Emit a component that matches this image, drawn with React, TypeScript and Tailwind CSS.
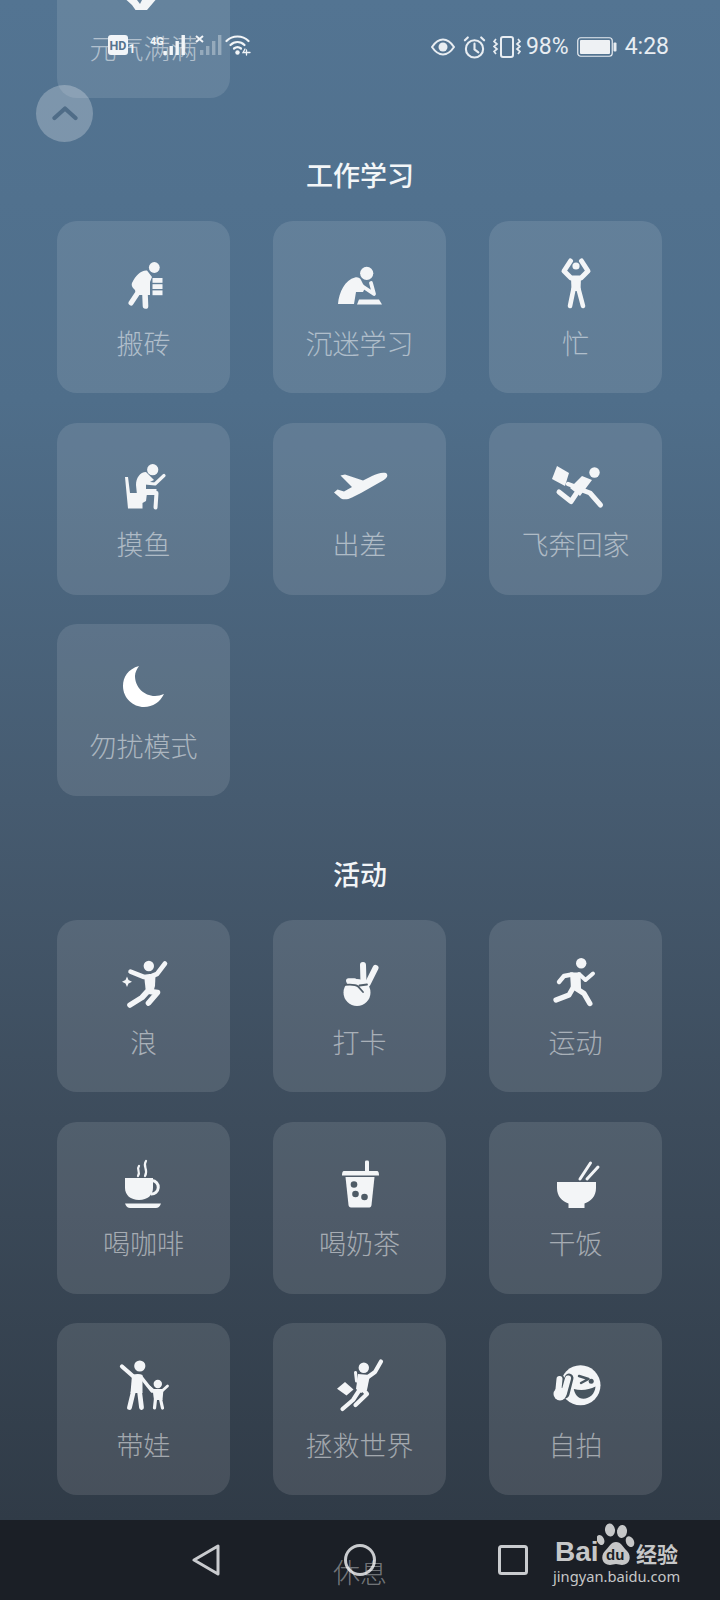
import React from 'react';

// all pictograms share a 60x60 box, white fill with round strokes for limbs
const Svg: React.FC<{ children: React.ReactNode }> = ({ children }) => (
    <svg width="60" height="60" viewBox="0 0 60 60" fill="#f3f5f7" stroke="none" className="block overflow-visible">
        {children}
    </svg>
);

const Limb: React.FC<{ d: string; w?: number; color?: string }> = ({ d, w = 4.5, color = '#f3f5f7' }) => (
    <path d={d} fill="none" stroke={color} strokeWidth={w} strokeLinecap="round" strokeLinejoin="round" />
);

const TopIcon = () => (
    <Svg>
        <path d="M12.5 40 L18 45 L21.5 50 L33 50 L41.5 40 L28 40 L26 44 L23 40 Z" />
    </Svg>
);

const BrickIcon = () => (
    <Svg>
        <circle cx="40.3" cy="12.5" r="5.4" />
        <path d="M33 15.5 C27 15 22 20 18 28 C17 31 19 33 21 35 L22 40 L36 40 L36 27 L38 22 Z" />
        <Limb d="M23 39 L17 48" w={5} />
        <Limb d="M31 39 L31.5 51" w={5.6} />
        <rect x="38.5" y="23" width="10" height="4.8" />
        <rect x="38.5" y="29.2" width="10" height="4.8" />
        <rect x="38.5" y="35.4" width="10" height="4.8" />
    </Svg>
);

const StudyIcon = () => (
    <Svg>
        <circle cx="36.7" cy="18.3" r="6.6" />
        <path d="M8 49 C9 37 15 25 25 22.5 C28 22 30 23 31 25 L35 33 L33 37 L26 37 L24 49 Z" />
        <Limb d="M29 29 L44 39 L41 28" w={3.8} />
        <path d="M29 44.5 L49 44.5 L52 49.5 L27 49.5 Z" />
    </Svg>
);

const BusyIcon = () => (
    <Svg>
        <circle cx="30" cy="11" r="3.6" />
        <Limb d="M24.5 6 L18 16 L25 23 L35 23 L42 16 L35.5 6" w={5} />
        <path d="M25 22 L35 22 L34.5 36 L25.5 36 Z" />
        <Limb d="M27.5 34 L24 51" w={4.6} />
        <Limb d="M32.5 34 L37 51" w={4.6} />
    </Svg>
);

const SlackIcon = () => (
    <Svg>
        <circle cx="38.7" cy="12.7" r="5.6" />
        <path d="M32 15 C26 15 22 21 22 28 L23 38 L42.5 38 L42.5 32 L32 32 L32 27 L40 23 Z" />
        <Limb d="M31 26 L41 27 L50 18.5" w={3.2} />
        <path d="M11 20 L14 20 L16 36 L33 36 L32 44 L28.5 46 L28.5 51.5 L14 51.5 Z" />
        <Limb d="M42.5 36 L41.5 50.5" w={4} />
    </Svg>
);

const PlaneIcon = () => (
    <Svg>
        <path d="M56 16 C52 15 47 16.5 42 19 L33 23.5 L15 17.5 L10.5 18.5 L22 30 L14 34.5 L7.5 32.5 L4 35.5 L11 41.5 C14 43 18 42.5 22 40.5 L31 36 L53 23.5 C57.5 21 58.5 18 56 16Z" />
    </Svg>
);

const RushIcon = () => (
    <Svg>
        <circle cx="48.5" cy="15.5" r="5.2" />
        <path d="M11 9 L23 16 L19 29 L6 22 Z" />
        <path d="M36 19 L46 23 L34 39 L24 31 Z" />
        <Limb d="M22 27 L33 31" w={4.4} />
        <Limb d="M36 33 L44 36 L54.5 48" w={5} />
        <Limb d="M30 37 L25 44.5 L13 35" w={5} />
    </Svg>
);

const MoonIcon = () => (
    <Svg>
        <path d="M25 8 C14 11 9 19 9 28 C9 40 19 49 30 49 C39 49 46 44 50 36 C47 37 44 38 41 38 C30 38 21 29 21 18 C21 14 23 11 25 8Z" fill="#ffffff" />
    </Svg>
);

const WaveIcon = () => (
    <Svg>
        <circle cx="34.8" cy="12" r="5.2" />
        <Limb d="M16.5 17.7 L30 23 L38 22 L43 20 L51 9.5" w={4.6} />
        <path d="M30 21 L41.5 21 L41 32 L39 39 L32 39 Z" />
        <Limb d="M36 37.5 L43.5 38.5 L34.5 49" w={5.6} />
        <Limb d="M33 38 L28 43.5 L16 51" w={5.6} />
        <path d="M13 22.5 L14.5 26 L18 27.7 L14.5 29.4 L13 33 L11.5 29.4 L8 27.7 L11.5 26 Z" />
    </Svg>
);

const VictoryIcon = () => (
    <Svg>
        <circle cx="27" cy="38.5" r="13.5" />
        <path d="M27 27 L38 29 L40 38 L28 36 Z" />
        <Limb d="M33.5 29 L33 11" w={6} />
        <Limb d="M37.5 30 L45.5 14" w={6} />
        <Limb d="M18.5 26.8 L24.5 26.8" w={5} />
        <path d="M14.5 31 C20 30.5 25 30 28 32.5 L33 38 M29.5 31.5 L37 30.5" fill="none" stroke="#505d69" strokeWidth="1.8" strokeLinecap="round" />
    </Svg>
);

const RunIcon = () => (
    <Svg>
        <circle cx="35.2" cy="9.3" r="5.2" />
        <path d="M24 18.5 L34.5 18.5 L35 35 L25 36 Z" />
        <Limb d="M26 20.5 L18 22 L13 28" w={4.4} />
        <Limb d="M33 20 L39.5 26 L47 19.5" w={4} />
        <Limb d="M29.5 34 L38 39.5 L43.8 49.5" w={5.4} />
        <Limb d="M27 34 L23 41 L10 46" w={5.2} />
    </Svg>
);

const CoffeeIcon = () => (
    <Svg>
        <path d="M11 22 L39 22 L39 32 C39 39 33.5 44 25 44 C16.5 44 11 39 11 32Z" />
        <path d="M38 24.5 A6.5 6.5 0 1 1 37 38" fill="none" stroke="#f3f5f7" strokeWidth="3" />
        <path d="M11 47.5 L47 47.5 C46 50.5 44 52 42 52 L16 52 C14 52 12 50.5 11 47.5Z" />
        <path d="M25 10 C22 14 27 15 24 20 M32 5 C28 11 35 13 31 20" fill="none" stroke="#f3f5f7" strokeWidth="2.2" strokeLinecap="round" />
    </Svg>
);

const MilkTeaIcon = () => (
    <Svg>
        <rect x="35" y="4.5" width="4" height="12" rx="1.4" />
        <path d="M14 15 L47 15 C48.5 15 49 17 49 19.5 L12 19.5 C12 17 12.5 15 14 15Z" />
        <path d="M15.5 21 L44.5 21 L41.5 49 C41.3 50.5 40.5 51.5 39.5 51.5 L21 51.5 C19.5 51.5 18.7 50.5 18.5 49 Z" />
        <circle cx="24" cy="28.5" r="3.3" fill="#4e5b66" />
        <circle cx="25.5" cy="38" r="3.3" fill="#4e5b66" />
        <circle cx="34.5" cy="41" r="3.3" fill="#4e5b66" />
    </Svg>
);

const BowlIcon = () => (
    <Svg>
        <path d="M11 26 L50 26 L50 32 C50 40 45 45.5 38.5 47.5 L38.5 52 L22.5 52 L22.5 47.5 C16 45.5 11 40 11 32Z" />
        <Limb d="M34 23 L44.5 7" w={3} />
        <Limb d="M41 23 L52 11" w={3} />
    </Svg>
);

const ParentIcon = () => (
    <Svg>
        <circle cx="25.8" cy="9" r="5.6" />
        <circle cx="43.8" cy="27" r="4.2" />
        <path d="M18 18 C22 16.5 26 16.5 28.5 18 L28.5 36 L16.5 36 Z" />
        <Limb d="M8 9.5 L20 20" w={4.2} />
        <Limb d="M27 20 L38 34" w={3.6} />
        <Limb d="M19.5 34 L15.5 50.5" w={4.8} />
        <Limb d="M25.5 34 L27.5 50.5" w={4.8} />
        <path d="M38.5 32 L49.5 32 L48.5 43 L40 43 Z" />
        <Limb d="M39.5 33.5 L35.5 30" w={2.8} />
        <Limb d="M48 34 L53.5 29" w={2.8} />
        <Limb d="M41.5 42 L40.5 51" w={3.2} />
        <Limb d="M46.5 42 L48.5 51" w={3.2} />
    </Svg>
);

const HeroIcon = () => (
    <Svg>
        <circle cx="33.8" cy="10.7" r="5.2" />
        <Limb d="M38 20 L45 15 L51 4.5" w={4.2} />
        <path d="M28 17 L40 18 L37 33 L31 36 L26 32 Z" />
        <Limb d="M25.5 15.5 L26.5 24" w={3} />
        <path d="M7 31.7 L15 25 L23.5 32.5 L16.5 38.5 Z" />
        <Limb d="M29.5 33 L23 43 L12.5 52" w={4.2} />
        <Limb d="M33.5 33 L37 37 L25.5 48" w={4.2} />
    </Svg>
);

const SelfieIcon = () => (
    <Svg>
        <circle cx="34.5" cy="28.3" r="20" />
        <Limb d="M13 37 L14 22 M19 37 L23 21" w={9} color="#48555f" />
        <Limb d="M12 37 L13.5 22" w={6} />
        <Limb d="M18 36 L22 21.5" w={6} />
        <circle cx="14" cy="37" r="6.5" />
        <path d="M33 19 L42.5 22 L35 26" fill="none" stroke="#48555f" strokeWidth="2.4" strokeLinecap="round" strokeLinejoin="round" />
        <circle cx="45.2" cy="24.3" r="2.5" fill="#48555f" />
        <path d="M27.8 32 C35 34 43 33 49.5 29.5 C49 37 43.5 41.7 37.5 41.7 C32 41.7 28.5 37 27.8 32Z" fill="#48555f" />
    </Svg>
);

const Tile: React.FC<{ label: string; icon: React.ReactNode }> = ({ label, icon }) => (
    <div className="flex h-[172px] w-[173px] flex-col items-center rounded-[20px] bg-white/[0.105] pt-[34px]">
        {icon}
        <span className="mt-[8.5px] text-[27px] leading-[38px] font-light whitespace-nowrap text-white/50">{label}</span>
    </div>
);

const work = [
    { label: '搬砖', icon: <BrickIcon /> },
    { label: '沉迷学习', icon: <StudyIcon /> },
    { label: '忙', icon: <BusyIcon /> },
    { label: '摸鱼', icon: <SlackIcon /> },
    { label: '出差', icon: <PlaneIcon /> },
    { label: '飞奔回家', icon: <RushIcon /> },
    { label: '勿扰模式', icon: <MoonIcon /> },
];

const activity = [
    { label: '浪', icon: <WaveIcon /> },
    { label: '打卡', icon: <VictoryIcon /> },
    { label: '运动', icon: <RunIcon /> },
    { label: '喝咖啡', icon: <CoffeeIcon /> },
    { label: '喝奶茶', icon: <MilkTeaIcon /> },
    { label: '干饭', icon: <BowlIcon /> },
    { label: '带娃', icon: <ParentIcon /> },
    { label: '拯救世界', icon: <HeroIcon /> },
    { label: '自拍', icon: <SelfieIcon /> },
];

const StatusBar = () => (
    <div className="absolute top-0 left-0 h-[92px] w-[720px] font-['Roboto',sans-serif] text-[23px] text-[#e8edf2]">
        <svg width="150" height="26" viewBox="0 0 150 26" className="absolute top-[33px] left-[107px]" fill="#f2f5f8">
            <rect x="1" y="2" width="20" height="20" rx="3" />
            <text x="2.5" y="17" fontSize="12.5" fontWeight="700" fill="#56738e" fontFamily="Roboto, sans-serif">HD</text>
            <text x="21.5" y="20" fontSize="12" fontWeight="700" fontFamily="Roboto, sans-serif">1</text>
            <text x="43" y="12" fontSize="11" fontWeight="700" fontFamily="Roboto, sans-serif">4G</text>
            <rect x="56.5" y="18" width="3.4" height="4" />
            <rect x="62.5" y="13" width="3.4" height="9" />
            <rect x="68.5" y="8" width="3.4" height="14" />
            <rect x="74.5" y="2" width="3.4" height="20" />
            <path d="M89 3 L96 9 M96 3 L89 9" stroke="#f2f5f8" strokeWidth="2" />
            <g opacity="0.35">
                <rect x="93" y="17" width="3.4" height="5" />
                <rect x="99" y="13" width="3.4" height="9" />
                <rect x="105" y="8" width="3.4" height="14" />
                <rect x="111" y="2" width="3.4" height="20" />
            </g>
        </svg>
        <svg width="26" height="22" viewBox="0 0 26 22" className="absolute top-[34px] left-[225px]" fill="none" stroke="#f2f5f8" strokeWidth="2.2" strokeLinecap="round">
            <path d="M1.5 7 C7.5 1 17.5 1 23.5 7" />
            <path d="M5.5 11 C9.5 7 15.5 7 19.5 11" />
            <path d="M9 14.5 C11 13 14 13 16 14.5" />
            <circle cx="12.5" cy="18.5" r="2.2" fill="#f2f5f8" stroke="none" />
            <path d="M20 15 L18 18.5 L25 18.5 M21.5 16 L21.5 21" strokeWidth="1.3" />
        </svg>
        <div className="absolute top-[35px] right-[51px] flex items-center leading-[24px]">
            <svg width="24" height="18" viewBox="0 0 24 18" fill="none" stroke="#e8edf2" strokeWidth="2" className="mr-[8px]">
                <path d="M1 9 C5 3 9 1.5 12 1.5 C15 1.5 19 3 23 9 C19 15 15 16.5 12 16.5 C9 16.5 5 15 1 9Z" />
                <circle cx="12" cy="9" r="4.5" fill="#e8edf2" stroke="none" />
            </svg>
            <svg width="23" height="23" viewBox="0 0 24 24" fill="none" stroke="#e8edf2" strokeWidth="2.2" strokeLinecap="round" className="mr-[7px]">
                <circle cx="12" cy="13.5" r="9" />
                <path d="M12 8 L12 14 L16 17" />
                <path d="M2 4.5 L5 1.5 M22 4.5 L19 1.5" />
            </svg>
            <svg width="28" height="22" viewBox="0 0 28 22" fill="none" stroke="#e8edf2" strokeWidth="2" className="mr-[5px]">
                <rect x="8" y="1" width="12" height="20" rx="2" />
                <path d="M3 3 L1 5.5 L4 8 L1 10.5 L4 13 L1 15.5 L3 18" strokeWidth="1.7" />
                <path d="M25 3 L27 5.5 L24 8 L27 10.5 L24 13 L27 15.5 L25 18" strokeWidth="1.7" />
            </svg>
            <span className="mr-[8px]">98%</span>
            <svg width="40" height="20" viewBox="0 0 40 20" className="mr-[8px]">
                <rect x="0.75" y="0.75" width="34.5" height="18.5" rx="3" fill="none" stroke="#e8edf2" strokeWidth="1.2" />
                <rect x="3" y="3" width="30" height="14" rx="1" fill="#eef1f4" />
                <rect x="36.5" y="5.5" width="3" height="9" rx="1" fill="#e8edf2" />
            </svg>
            <span>4:28</span>
        </div>
    </div>
);

const NavBar = () => (
    <nav className="absolute bottom-0 left-0 h-[80px] w-[720px] bg-[#1b1f26]">
        <svg width="28" height="32" viewBox="0 0 28 32" className="absolute top-[24px] left-[192px]" fill="none" stroke="#c9cbce" strokeWidth="3" strokeLinejoin="round">
            <path d="M26 2 L26 30 L2 16 Z" />
        </svg>
        <svg width="32" height="32" viewBox="0 0 32 32" className="absolute top-[24px] left-[344px]" fill="none" stroke="#c9cbce" strokeWidth="3">
            <circle cx="16" cy="16" r="14.5" />
        </svg>
        <svg width="30" height="30" viewBox="0 0 30 30" className="absolute top-[25px] left-[498px]" fill="none" stroke="#c9cbce" strokeWidth="3">
            <rect x="1.5" y="1.5" width="27" height="27" rx="2" />
        </svg>
        <span className="absolute top-[33px] left-[333px] text-[27px] leading-[38px] font-light text-white/40">休息</span>
        <div className="absolute top-0 left-[553px] h-[68px] w-[130px] text-[#c6c7c8]">
            <span className="absolute top-[17px] left-[2px] font-['Liberation_Sans',sans-serif] text-[28px] leading-[30px] font-bold">Bai</span>
            <svg width="40" height="46" viewBox="0 0 40 46" className="absolute top-[3px] left-[44px]" fill="#c6c7c8">
                <ellipse cx="3.5" cy="17" rx="3.6" ry="5.2" transform="rotate(-25 3.5 17)" />
                <ellipse cx="13" cy="7" rx="5" ry="6.5" transform="rotate(-8 13 7)" />
                <ellipse cx="25" cy="8.5" rx="5" ry="6.5" transform="rotate(8 25 8.5)" />
                <ellipse cx="33" cy="18.7" rx="4" ry="5.6" transform="rotate(-25 33 18.7)" />
                <path d="M19 19 C14 19 12 24 8 28 C3 33 5 42 13 42 C15 42 17 41 19 41 C21 41 23 42 25 42 C33 42 35 33 30 28 C26 24 24 19 19 19Z" />
            </svg>
            <span className="absolute top-[27px] left-[53px] font-['Liberation_Sans',sans-serif] text-[15px] leading-[16px] font-bold text-[#1b1f26]">du</span>
            <span className="absolute top-[19px] left-[83px] font-['Noto_Sans_CJK_SC',sans-serif] text-[21px] leading-[28px] font-bold whitespace-nowrap">经验</span>
            <span className="absolute top-[47px] left-0 font-['Noto_Sans',sans-serif] text-[14.7px] leading-[18px] whitespace-nowrap">jingyan.baidu.com</span>
        </div>
    </nav>
);

const App: React.FC = () => {
    return (
        <div className="relative h-[1600px] w-[720px] overflow-hidden bg-[linear-gradient(180deg,#537492_0%,#4f6e8a_25%,#465b70_50%,#3d4c5c_70%,#303b47_95%)] font-['Noto_Sans_CJK_SC',sans-serif]">
            <main className="-mt-[74px] px-[57px]">
                <Tile label="元气满满" icon={<TopIcon />} />

                <h2 className="mt-[57px] mb-[26px] text-center text-[27px] leading-[40px] font-medium text-[#f3f6f8]">工作学习</h2>
                <div className="grid grid-cols-[173px_173px_173px] gap-x-[43px] gap-y-[29.5px]">
                    {work.map((item) => (
                        <Tile key={item.label} label={item.label} icon={item.icon} />
                    ))}
                </div>

                <h2 className="mt-[58px] mb-[26px] text-center text-[27px] leading-[40px] font-medium text-[#f3f6f8]">活动</h2>
                <div className="grid grid-cols-[173px_173px_173px] gap-x-[43px] gap-y-[29.5px]">
                    {activity.map((item) => (
                        <Tile key={item.label} label={item.label} icon={item.icon} />
                    ))}
                </div>
            </main>

            <StatusBar />

            <button className="absolute top-[85px] left-[36px] flex h-[57px] w-[57px] items-center justify-center rounded-full bg-white/25">
                <svg width="26" height="16" viewBox="0 0 26 16" fill="none" stroke="#4f6c87" strokeWidth="4.2" strokeLinecap="round" strokeLinejoin="round" className="-mt-[2px]">
                    <path d="M2.5 13 L13 3.5 L23.5 13" />
                </svg>
            </button>

            <NavBar />
        </div>
    );
};

export default App;
